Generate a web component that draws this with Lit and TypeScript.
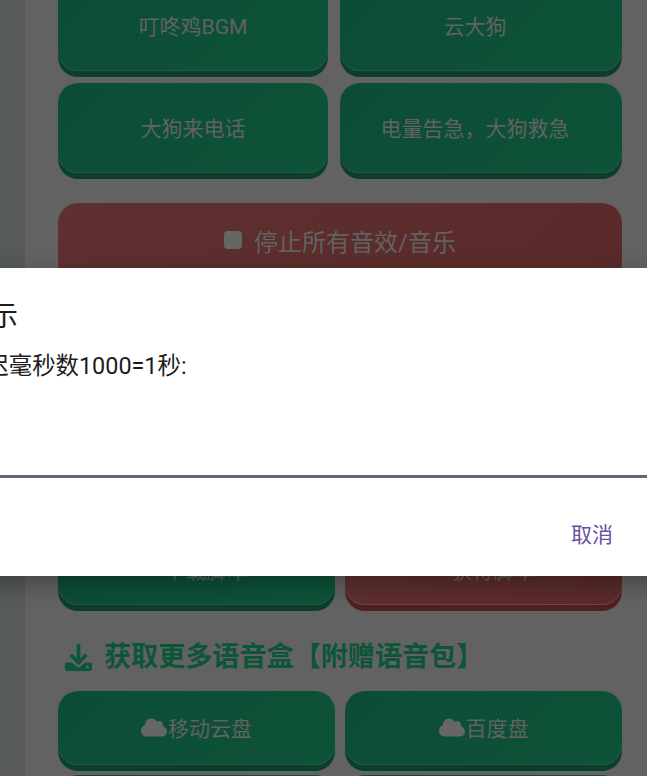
import { LitElement, html, css, svg } from "lit";
import { customElement } from "lit/decorators.js";

const cloud = svg`<svg viewBox="0 0 640 512"><path d="M537.6 226.6c4.1-10.7 6.4-22.4 6.4-34.6 0-53-43-96-96-96-19.7 0-38.1 6-53.3 16.2C367 64.2 315.3 32 256 32c-88.4 0-160 71.6-160 160 0 2.7.1 5.4.2 8.1C40.2 219.8 0 273.2 0 336c0 79.5 64.5 144 144 144h368c70.7 0 128-57.3 128-128 0-61.9-44-113.6-102.4-125.4z"/></svg>`;

@customElement("app-root")
export class AppRoot extends LitElement {
  static styles = css`
    :host {
      display: block;
      position: relative;
      width: 647px;
      height: 776px;
      overflow: hidden;
      font-family: "Roboto", "Noto Sans CJK SC", sans-serif;
      background: #626262;
    }
    .page { display: flex; height: 776px; overflow: hidden; }
    .rail { width: 25px; flex: none; background: #565a59; }
    .content {
      flex: 1;
      min-width: 0;
      padding: 0 25px 0 33px;
      display: flex;
      flex-direction: column;
      margin-top: -19px;
    }
    .grid { display: grid; flex: none; }
    .grid.a { grid-template-columns: 270px 282px; gap: 12.5px 12px; }
    .grid.b { grid-template-columns: 277px 277px; gap: 10px; }
    .btn {
      border-radius: 20px;
      display: flex;
      align-items: center;
      justify-content: center;
      color: #626262;
      font-size: 21px;
      box-sizing: border-box;
      padding-bottom: 2px;
      background: linear-gradient(135deg, #0c4c35, #0d5338);
      box-shadow: inset 0 -1px 0 #32534a, 0 6px 0 #0b3e2d;
    }
    .pr { padding-right: 12px; }
    .r1, .r2 { height: 89.5px; }
    .r3 { height: 74px; }
    .red {
      background: linear-gradient(135deg, #5f3030, #5a2a2a);
      box-shadow: inset 0 -1px 0 #6e4444, 0 6px 0 #512020;
    }
    .stop {
      flex: none;
      margin-top: 30.5px;
      height: 78px;
      gap: 12px;
      font-size: 24px;
      padding-bottom: 4px;
    }
    .stop i { width: 18px; height: 18px; border-radius: 4px; background: #666; }
    .spacer { height: 254px; flex: none; }
    .half { height: 70px; gap: 6px; }
    .dot { width: 14px; height: 14px; border-radius: 50%; background: #626262; }
    h3 {
      margin: 36px 0 18px 7px;
      height: 32px;
      flex: none;
      display: flex;
      align-items: center;
      gap: 12px;
      font-size: 27.1px;
      line-height: 32px;
      font-weight: 700;
      color: #0c5539;
    }
    h3 svg { width: 27px; height: 27px; flex: none; }
    h3 .stroke { fill: none; stroke: #0c5539; stroke-width: 3.6; }
    h3 .tray { fill: #0c5539; fill-rule: evenodd; }
    .btn svg { width: 26px; height: 21px; fill: #666; flex: none; margin-right: 1px; }
    .dialog {
      position: absolute;
      top: 268px;
      left: -48px;
      width: 720px;
      height: 308px;
      box-sizing: border-box;
      background: #fff;
      padding: 32px 0 0 10px;
      color: #1d1b20;
      box-shadow: 0 8px 22px rgba(0,0,0,.3);
    }
    .title { font-size: 28px; line-height: 34px; }
    .msg { font-size: 23.4px; line-height: 30px; margin-top: 17px; }
    .input { height: 94px; border-bottom: 3px solid #68657a; margin-left: -10px; }
    .actions { display: flex; justify-content: flex-end; padding: 42px 59px 0 0; }
    .actions span { font-size: 21px; color: #6750a4; line-height: 30px; }
  `;

  render() {
    return html`
      <div class="page">
        <div class="rail"></div>
        <div class="content">
          <div class="grid a">
            <div class="btn r1">叮咚鸡BGM</div>
            <div class="btn r1 pr">云大狗</div>
            <div class="btn r2">大狗来电话</div>
            <div class="btn r2 pr">电量告急，大狗救急</div>
          </div>
          <div class="btn stop red"><i></i>停止所有音效/音乐</div>
          <div class="spacer"></div>
          <div class="grid b">
            <div class="btn half"><span class="dot"></span>下载脚本</div>
            <div class="btn half red"><span class="dot"></span>获得脚本</div>
          </div>
          <h3>
            <svg viewBox="0 0 27 27">
              <path class="stroke" d="M13.5 0V19M5.7 10.8l7.8 8.2 7.8-8.2"/>
              <path class="tray" d="M2 18.5h4.8l6.7 5.5 6.7-5.5H25a2 2 0 0 1 2 2V25a2 2 0 0 1-2 2H2a2 2 0 0 1-2-2v-4.500a2 2 0 0 1 2-2zM22.300 21.500a1.500 1.500 0 1 0 0 3 1.500 1.500 0 0 0 0-3z"/>
            </svg>
            获取更多语音盒【附赠语音包】
          </h3>
          <div class="grid b">
            <div class="btn r3">${cloud}移动云盘</div>
            <div class="btn r3">${cloud}百度盘</div>
            <div class="btn r3"></div>
            <div class="btn r3"></div>
          </div>
        </div>
      </div>
      <div class="dialog">
        <div class="title">提示</div>
        <div class="msg">延迟毫秒数1000=1秒:</div>
        <div class="input"></div>
        <div class="actions"><span>取消</span></div>
      </div>
    `;
  }
}
